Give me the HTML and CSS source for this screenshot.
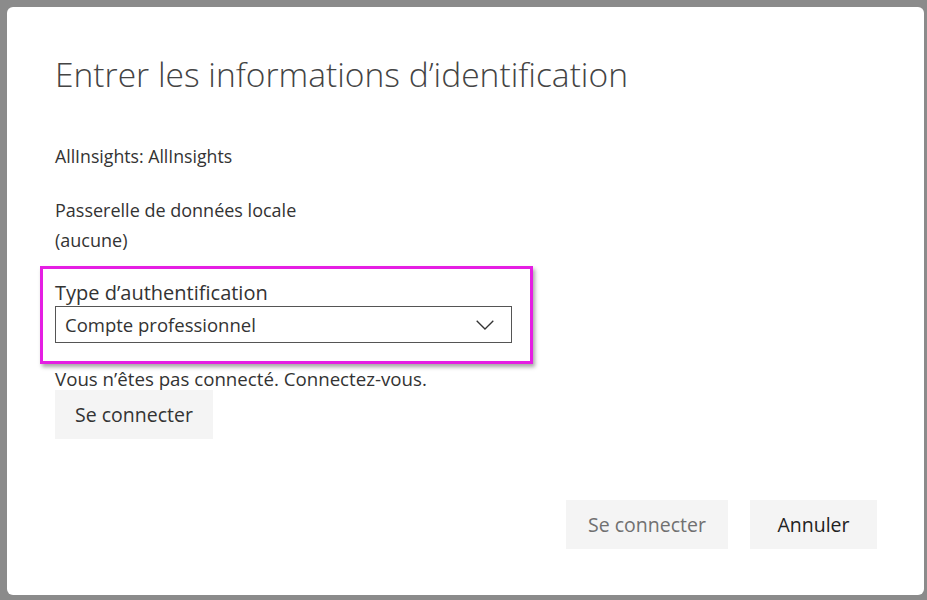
FILE: index.html
```html
<!DOCTYPE html>
<html lang="fr">
<head>
<meta charset="utf-8">
<title>Entrer les informations d’identification</title>
<link rel="stylesheet" href="styles.css">
</head>
<body>
<div class="dialog">
  <h1 class="title">Entrer les informations d’identification</h1>
  <p class="line source">AllInsights: AllInsights</p>
  <div class="gateway">
    <p class="line">Passerelle de données locale</p>
    <p class="line">(aucune)</p>
  </div>
  <div class="highlight">
    <label class="field-label">Type d’authentification</label>
    <div class="select">
      <span class="select-value">Compte professionnel</span>
      <svg class="chevron" width="18" height="10" viewBox="0 0 18 10"><path d="M0.7 0.7 L9 9 L17.3 0.7" fill="none" stroke="#333" stroke-width="1.3"/></svg>
    </div>
  </div>
  <p class="line status">Vous n’êtes pas connecté. Connectez-vous.</p>
  <button class="btn btn-inline">Se connecter</button>
  <div class="footer">
    <button class="btn btn-disabled">Se connecter</button>
    <button class="btn btn-cancel">Annuler</button>
  </div>
</div>
</body>
</html>
```
FILE: styles.css
```css
html, body {
  margin: 0;
  padding: 0;
}
body {
  background: #8b8b8b;
  width: 927px;
  height: 600px;
  overflow: hidden;
  font-family: "Open Sans", "Noto Sans", sans-serif;
  color: #333;
}
.dialog {
  box-sizing: border-box;
  margin: 7px 0 0 7px;
  width: 917px;
  height: 588px;
  background: #fff;
  border-radius: 6px;
  padding: 0 47px 46px 48px;
  display: flex;
  flex-direction: column;
  align-items: flex-start;
}
.title {
  margin: 45px 0 0 0;
  font-size: 33.6px;
  font-weight: 300;
  line-height: 44px;
  color: #444;
}
.line {
  margin: 0;
  font-size: 18px;
  line-height: 30px;
}
.source {
  margin-top: 45px;
  font-size: 17.7px;
}
.gateway {
  margin-top: 24px;
}
.highlight {
  margin: 11px 0 0 -15px;
  border: 3px solid #e51ee3;
  padding: 11px 18px 18px 12px;
  box-shadow: 2px 3px 4px rgba(0,0,0,0.35);
  display: flex;
  flex-direction: column;
}
.field-label {
  font-size: 20px;
  line-height: 26px;
  color: #333;
}
.select {
  box-sizing: border-box;
  width: 457px;
  height: 37px;
  border: 1px solid #555;
  display: flex;
  align-items: center;
  justify-content: space-between;
  padding: 0 17px 0 9px;
}
.select-value {
  font-size: 18.5px;
  color: #333;
}
.status {
  margin-top: 4px;
  line-height: 22px;
  font-size: 18.7px;
}
.btn {
  font-family: inherit;
  border: none;
  background: #f4f4f4;
  font-size: 19.5px;
  color: #333;
  height: 49px;
  padding: 0;
  cursor: pointer;
}
.btn-inline {
  width: 158px;
}
.footer {
  margin-top: auto;
  align-self: flex-end;
  display: flex;
  gap: 22px;
}
.btn-disabled {
  width: 162px;
  color: #707070;
}
.btn-cancel {
  width: 127px;
  color: #222;
}
```
